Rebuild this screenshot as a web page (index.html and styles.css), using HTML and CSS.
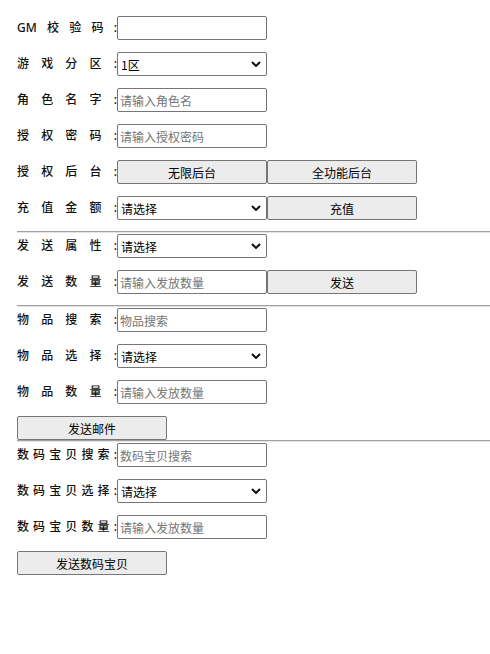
FILE: index.html
```html
<!DOCTYPE html>
<html>
<head>
    <meta charset="utf-8">
    <title>GM</title>
    <link rel="stylesheet" href="styles.css">
</head>
<body>
    <form class="gm-form">
        <div class="row">
            <label class="label">GM校验码:</label>
            <input type="text" class="field">
        </div>
        <div class="row">
            <label class="label">游戏分区:</label>
            <span class="select-wrap">
                <select class="field">
                    <option>1区</option>
                </select>
                <svg class="chevron" width="10" height="6" viewBox="0 0 10 6"><path d="M1 1l4 4 4-4" fill="none" stroke="#111" stroke-width="2"/></svg>
            </span>
        </div>
        <div class="row">
            <label class="label">角色名字:</label>
            <input type="text" class="field" placeholder="请输入角色名">
        </div>
        <div class="row">
            <label class="label">授权密码:</label>
            <input type="text" class="field" placeholder="请输入授权密码">
        </div>
        <div class="row">
            <label class="label">授权后台:</label>
            <button type="button" class="btn">无限后台</button>
            <button type="button" class="btn">全功能后台</button>
        </div>
        <div class="row before-hr">
            <label class="label">充值金额:</label>
            <span class="select-wrap">
                <select class="field">
                    <option>请选择</option>
                </select>
                <svg class="chevron" width="10" height="6" viewBox="0 0 10 6"><path d="M1 1l4 4 4-4" fill="none" stroke="#111" stroke-width="2"/></svg>
            </span>
            <button type="button" class="btn">充值</button>
        </div>

        <hr>

        <div class="row">
            <label class="label">发送属性:</label>
            <span class="select-wrap">
                <select class="field">
                    <option>请选择</option>
                </select>
                <svg class="chevron" width="10" height="6" viewBox="0 0 10 6"><path d="M1 1l4 4 4-4" fill="none" stroke="#111" stroke-width="2"/></svg>
            </span>
        </div>
        <div class="row before-hr">
            <label class="label">发送数量:</label>
            <input type="text" class="field" placeholder="请输入发放数量">
            <button type="button" class="btn">发送</button>
        </div>

        <hr>

        <div class="row">
            <label class="label">物品搜索:</label>
            <input type="text" class="field" placeholder="物品搜索">
        </div>
        <div class="row">
            <label class="label">物品选择:</label>
            <span class="select-wrap">
                <select class="field">
                    <option>请选择</option>
                </select>
                <svg class="chevron" width="10" height="6" viewBox="0 0 10 6"><path d="M1 1l4 4 4-4" fill="none" stroke="#111" stroke-width="2"/></svg>
            </span>
        </div>
        <div class="row">
            <label class="label">物品数量:</label>
            <input type="text" class="field" placeholder="请输入发放数量">
        </div>
        <div class="row no-gap">
            <button type="button" class="btn">发送邮件</button>
        </div>

        <hr>

        <div class="row">
            <label class="label">数码宝贝搜索:</label>
            <input type="text" class="field" placeholder="数码宝贝搜索">
        </div>
        <div class="row">
            <label class="label">数码宝贝选择:</label>
            <span class="select-wrap">
                <select class="field">
                    <option>请选择</option>
                </select>
                <svg class="chevron" width="10" height="6" viewBox="0 0 10 6"><path d="M1 1l4 4 4-4" fill="none" stroke="#111" stroke-width="2"/></svg>
            </span>
        </div>
        <div class="row">
            <label class="label">数码宝贝数量:</label>
            <input type="text" class="field" placeholder="请输入发放数量">
        </div>
        <div class="row">
            <button type="button" class="btn">发送数码宝贝</button>
        </div>
    </form>
</body>
</html>
```

FILE: styles.css
```css
body {
    margin: 0;
    font-family: "Noto Sans", "Noto Sans CJK SC", sans-serif;
    font-size: 12px;
    color: #111;
    background: #fff;
}
.gm-form {
    padding: 16px 0 0 17px;
}
.row {
    display: flex;
    align-items: center;
    height: 24px;
    margin-bottom: 12px;
}
.row.before-hr {
    margin-bottom: 11px;
}
.row.no-gap {
    margin-bottom: 0;
}
.label {
    flex-shrink: 0;
    width: 100px;
    text-align-last: justify;
    line-height: 24px;
    font-weight: 500;
}
.field,
.btn {
    box-sizing: border-box;
    width: 150px;
    height: 24px;
    margin: 0;
    font-family: "Noto Sans CJK SC", sans-serif;
    font-size: 12px;
    color: #000;
}
.field {
    padding: 1px 2px;
    border: 1px solid #767676;
    border-radius: 2px;
    background: #fff;
}
.field::placeholder {
    color: #757575;
}
select.field {
    appearance: none;
    padding: 0 18px 0 3px;
}
.select-wrap {
    position: relative;
    display: flex;
}
.chevron {
    position: absolute;
    right: 6px;
    top: 9px;
    pointer-events: none;
}
.btn {
    padding: 0 6px;
    border: 1px solid #767676;
    border-radius: 2px;
    background: #ececec;
}
hr {
    margin: 0 0 1px;
    border: 0;
    border-top: 1px solid #a0a0a0;
    border-bottom: 1px solid #e4e4e4;
}
```
